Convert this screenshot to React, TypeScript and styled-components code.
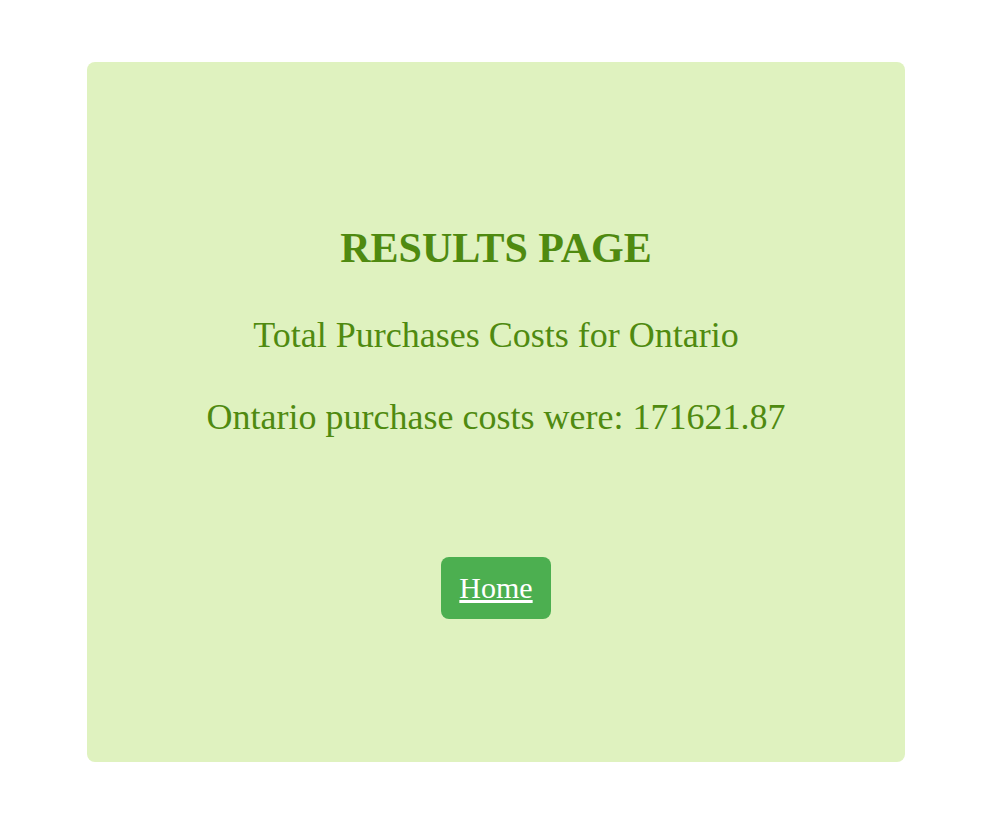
import React from "react";
import styled, { createGlobalStyle } from "styled-components";

const Global = createGlobalStyle`
  html, body { margin: 0; padding: 0; background: #ffffff; }
  body { font-family: "Liberation Serif", "Times New Roman", serif; }
`;

const Page = styled.div`
  padding: 62px 0 0 87px;
`;

const Card = styled.main`
  box-sizing: border-box;
  width: 818px;
  height: 700px;
  background: #dff2bf;
  border-radius: 8px;
  padding-top: 162px;
  display: flex;
  flex-direction: column;
  align-items: center;
  color: #4f8a10;
`;

const Title = styled.h1`
  margin: 0;
  font-size: 42px;
  font-weight: bold;
  line-height: normal;
`;

const Line = styled.p<{ $gap: number }>`
  margin: ${(p) => p.$gap}px 0 0;
  font-size: 36px;
  line-height: normal;
`;

const HomeButton = styled.a`
  margin-top: 119px;
  display: inline-block;
  background: #4caf50;
  color: #ffffff;
  font-size: 30px;
  line-height: normal;
  padding: 14px 18px;
  border-radius: 8px;
  text-decoration: underline;
  cursor: pointer;
`;

export default function App() {
  return (
    <>
      <Global />
      <Page>
        <Card>
          <Title>RESULTS PAGE</Title>
          <Line $gap={42}>Total Purchases Costs for Ontario</Line>
          <Line $gap={40}>Ontario purchase costs were: 171621.87</Line>
          <HomeButton href="#">Home</HomeButton>
        </Card>
      </Page>
    </>
  );
}
